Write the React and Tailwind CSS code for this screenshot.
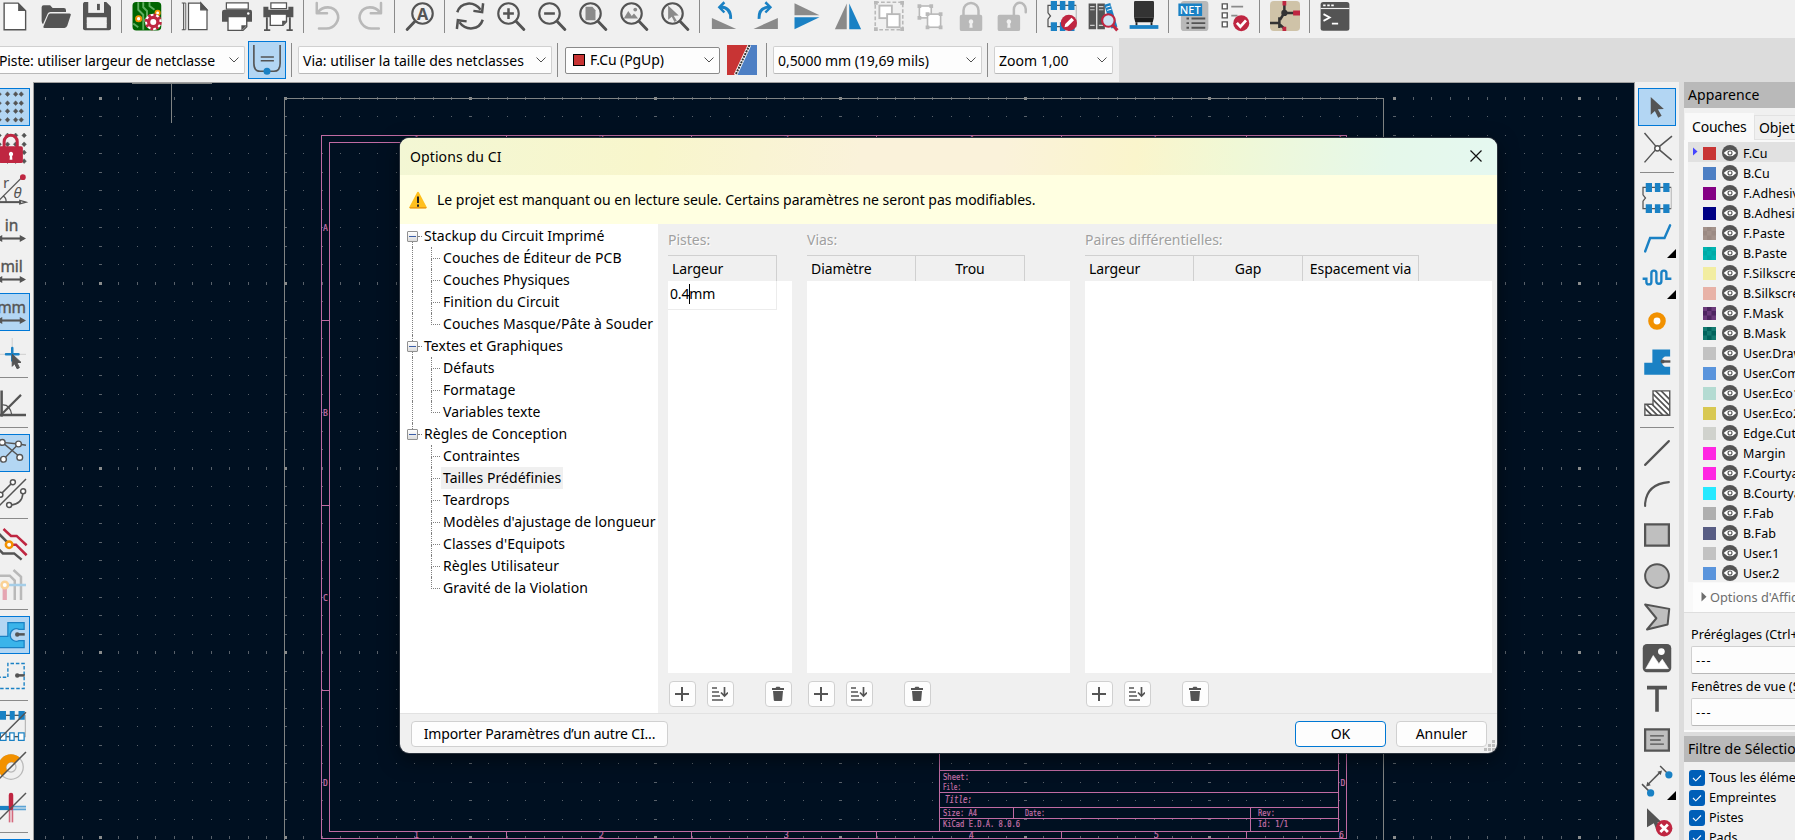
import React from "react";
import { clsx } from "clsx";

const G = "#545454";
const B = "#1a81c4";
const R = "#bf2641";
const L = "#b9b9b9";
const O = "#f29100";

/* ---------- icon drawings, all on a 24 unit grid ---------- */

const magnifier = (
  <g fill="none" stroke={G}>
    <circle cx="10" cy="10" r="8.2" strokeWidth="1.7" />
    <path d="M16 16.2L22.3 22.8" strokeWidth="2.3" strokeLinecap="round" />
  </g>
);

const gridDots = (xs, ys) =>
  xs.flatMap((x) =>
    ys.map((y) => <path key={x + "-" + y} d={`M${x} ${y - 1.9}l1.8 1.9-1.8 1.9-1.8-1.9z`} fill={G} stroke={G} strokeWidth="0.4" />)
  );

const unitArrow = (
  <g>
    <path d="M2 18.8H22" stroke={G} strokeWidth="1.7" />
    <path d="M0 18.8l5-2.8v5.6zM24 18.8l-5-2.8v5.6z" fill={G} />
  </g>
);

const unitText = (t) => (
  <text x="12.500" y="13" textAnchor="middle" fontFamily="Noto Sans, sans-serif" fontSize="12.4" fill={G} stroke={G} strokeWidth="0.3">
    {t}
  </text>
);

const chip = (
  <g>
    <path d="M4 3.5H.8v6l2 2.5-2 2.5v6H4M20 3.5h3.4M20 20.5h3.4" fill="none" stroke={G} strokeWidth="1" />
    <path d="M23.4 3.5v17" stroke="#b9b9b9" strokeWidth="0.9" />
    <path d="M7 3.5h11M7 20.5h11" stroke={G} strokeWidth="0.9" />
    <path d="M3 0h5v7.2H3zM10.3 0h4.4v7.2h-4.4zM17 0h5v7.2h-5zM3 17h5v7H3zM10.3 17h4.4v7h-4.4zM17 17h5v7h-5z" fill={B} />
  </g>
);

const lockShape = (c) => (
  <g>
    <path fillRule="evenodd" fill={c} d="M4.5 11h15q1.5 0 1.5 1.5v10q0 1.5-1.5 1.5h-15Q3 24 3 22.500v-10Q3 11 4.500 11zM12 14.500a2 2 0 0 0-1 3.600l-.3 3.200h2.600l-.3-3.200a2 2 0 0 0-1-3.600z" />
  </g>
);

const icons = {
  doc: (
    <g>
      <path d="M3.300 1.700h11.200l6 6.100v15.200H3.300z" fill="#fff" stroke={G} strokeWidth="1.100" />
      <path d="M14.500 1.500v6.500h6.300z" fill={G} />
    </g>
  ),
  folder: (
    <g fill={G}>
      <path d="M.5 5q0-1.600 1.600-1.600h5.200l2 2.200h9q1.700 0 1.700 1.700v1.500H7.500q-1.600 0-2.200 1.300L1.600 18.500Q.5 17.500.5 16z" />
      <path d="M7.300 9.900h15.500q1.500 0 1 1.400l-2.800 8.500q-.6 1.700-2.200 1.700H2.700q-1.300 0-.7-1.400l3.700-8.700q.5-1.500 1.600-1.500z" />
    </g>
  ),
  save: (
    <g>
      <path d="M1.800.8h17.600l3.800 3.700v17.200q0 1.600-1.600 1.600H2.400q-1.600 0-1.600-1.600V1.800z" fill={G} />
      <path d="M5 .8h12.600v8.700H5z" fill="#f0f0f0" />
      <path d="M12 2.300h2.300v5H12z" fill={G} />
      <path d="M3.800 13h16v8.700h-16z" fill="#f0f0f0" />
      <path d="M3.800 14.500h16M3.800 18h16" stroke="#f0f0f0" strokeWidth=".5" />
    </g>
  ),
  board: (
    <g>
      <rect x=".4" y=".8" width="23" height="22.800" rx="3" fill="#006400" />
      <path d="M5 1v6l4 4v12M9 1v4l3 3v5l-3 4M14 1v3l4 3M1 18l4 3" fill="none" stroke="#5faf5f" strokeWidth="1.500" />
      <circle cx="5.300" cy="14.200" r="2.100" fill="#fff" stroke={O} strokeWidth="1.500" />
      <circle cx="20.500" cy="9.500" r="1.800" fill="#fff" stroke={O} strokeWidth="1.300" />
      <circle cx="17" cy="16.700" r="6.600" fill="#fff" />
      <circle cx="17" cy="16.700" r="5.600" fill="none" stroke={R} strokeWidth="2.400" strokeDasharray="2.200 2.198" />
      <circle cx="17" cy="16.700" r="3.700" fill="none" stroke={R} strokeWidth="2.600" />
    </g>
  ),
  page: (
    <g fill="none" stroke={G} transform="translate(-1 0)">
      <path d="M6.200 1.600v21.200h14.800V6.900l-5-5.300z" fill="#fff" strokeWidth="1" />
      <path d="M16 1.500v5.500h5z" fill={G} />
      <path d="M2.300 1.500v21.500M.8 1.600h3M.8 23h3" strokeWidth=".9" />
      <path d="M4 1.500v21.500" strokeWidth=".7" />
    </g>
  ),
  print: (
    <g transform="translate(-0.800 0)">
      <path d="M3.500 1.500h17.500v5H3.500z" fill="#fff" stroke={G} strokeWidth="1" />
      <path d="M2 7h20.500Q24 7 24 8.500v8H0v-8Q0 7 2 7z" fill={G} />
      <circle cx="21" cy="10" r="1" fill="#fff" />
      <path d="M4.800 12.500h15v8l-3 3h-12z" fill="#fff" stroke={G} strokeWidth="1.100" />
      <path d="M15.500 23.800v-4.500h4.500z" fill={G} />
    </g>
  ),
  plot: (
    <g transform="translate(-0.500 0)">
      <path d="M6 1.500h12.500v4.500H6z" fill="#fff" stroke={G} strokeWidth="1" />
      <path d="M0 4.500h4v2.500h16V4.500h4V13H0z" fill={G} />
      <path d="M2.800 13v10M21.200 13v10M.5 23.300h5M18.500 23.300h5" stroke={G} strokeWidth="1.500" />
      <path d="M5.500 10.500h13v6l-2.800 3H5.500z" fill="#fff" stroke={G} strokeWidth="1.100" />
      <path d="M15 19.700v-4h3.500z" fill={G} />
    </g>
  ),
  undo: (
    <g transform="translate(-1 0)">
      <path d="M4.500 8.500C8 4 16.500 3.500 19.500 9.500S17 22 11 22H5" fill="none" stroke={L} strokeWidth="2.100" strokeLinecap="round" />
      <path d="M3.200 1.500v8.300h8.200" fill="none" stroke={L} strokeWidth="2" strokeLinejoin="round" strokeLinecap="round" />
    </g>
  ),
  redo: (
    <g transform="matrix(-1 0 0 1 24 0)">
      <path d="M4.500 8.500C8 4 16.500 3.500 19.500 9.500S17 22 11 22H5" fill="none" stroke={L} strokeWidth="2.100" strokeLinecap="round" />
      <path d="M3.200 1.500v8.300h8.200" fill="none" stroke={L} strokeWidth="2" strokeLinejoin="round" strokeLinecap="round" />
    </g>
  ),
  find: (
    <g>
      <g transform="matrix(-1 0 0 1 24 0)">{magnifier}</g>
      <text x="14" y="14.800" textAnchor="middle" fontFamily="Noto Sans, sans-serif" fontWeight="700" fontSize="13" fill={G}>A</text>
    </g>
  ),
  refresh: (
    <g fill="none" stroke={G} strokeWidth="2">
      <path d="M1.800 9C4.500.6 15 -.2 20.500 7" />
      <path d="M22.500 1.800l-.8 7-7-.9" />
      <path d="M22.200 15C19.500 23.400 9 24.200 3.500 17" />
      <path d="M1.500 22.400l.8-7 7 .9" />
    </g>
  ),
  zoomin: <g>{magnifier}<path d="M10 5.700v8.600M5.700 10h8.600" stroke={G} strokeWidth="2" /></g>,
  zoomout: <g>{magnifier}<path d="M5.700 10h8.600" stroke={G} strokeWidth="2" /></g>,
  zoomfit: <g>{magnifier}<path d="M6 4.500h5.500l2.500 2.800v8H6z" fill="#8a8a8a" /></g>,
  zoomobj: (
    <g>
      {magnifier}
      <path d="M3.800 14l3.600-6 2.800 4 1.800-2 3.300 4z" fill="#8a8a8a" />
      <circle cx="13" cy="6.800" r="1.500" fill="#8a8a8a" />
    </g>
  ),
  zoomsel: <g>{magnifier}<path d="M6.500 3.500l8.500 8-4 .2 2.400 4-1.800 1-2.200-4.200-2.900 2.500z" fill="#8a8a8a" /></g>,
  rotl: (
    <g>
      <path d="M1.500 13.500v8.800h19.500z" fill="#8a8a8a" />
      <path d="M8.500 4.800q8.500.5 8 9.500" fill="none" stroke={B} strokeWidth="2.300" />
      <path d="M11.500 1L7.500 5l4 4.200" fill="none" stroke={B} strokeWidth="2" />
    </g>
  ),
  rotr: (
    <g>
      <path d="M21.500 13.500v8.800H2z" fill="#8a8a8a" />
      <path d="M14.500 4.800q-8.500.5-8 9.500" fill="none" stroke={B} strokeWidth="2.300" />
      <path d="M11.500 1l4 4-4 4.200" fill="none" stroke={B} strokeWidth="2" />
    </g>
  ),
  flip: (
    <g>
      <path d="M2 1.800v9.500h20z" fill="#8a8a8a" />
      <path d="M2 22.500V13h20z" fill={B} />
    </g>
  ),
  mirror: (
    <g>
      <path d="M1.500 22.500h9.500V2z" fill="#8a8a8a" />
      <path d="M22.500 22.500H13V2z" fill={B} />
    </g>
  ),
  group: (
    <g fill="none" stroke={L}>
      <rect x="1" y="1" width="22" height="22" strokeWidth="1.300" strokeDasharray="3 1.600" />
      <path d="M0 0h3v3H0zM21 0h3v3h-3zM0 21h3v3H0zM21 21h3v3h-3z" fill={L} stroke="none" />
      <rect x="4.300" y="3.700" width="10" height="10" fill="#fff" strokeWidth="1.500" />
      <rect x="10.500" y="10.500" width="10" height="10.500" fill="#fff" strokeWidth="1.500" />
    </g>
  ),
  ungroup: (
    <g fill="none" stroke={L}>
      <rect x="3.500" y="4" width="9.500" height="9.500" fill="#fff" strokeWidth="1.300" />
      <rect x="10" y="10.500" width="10.500" height="10.500" fill="#fff" strokeWidth="1.300" />
      <path d="M2 2.500h3v3H2zM11.500 2.500h3v3h-3zM2 12h3v3H2zM8.500 9h3v3h-3zM19 9h3v3h-3zM8.500 19.500h3v3h-3zM19 19.500h3v3h-3z" fill={L} stroke="none" />
    </g>
  ),
  lock: <g>{lockShape(L)}<path d="M6 11.500V7.500a6 6 0 0 1 12 0v4" fill="none" stroke={L} strokeWidth="2" /></g>,
  unlock: (
    <g>
      <g transform="translate(-2.500 0)">{lockShape(L)}</g>
      <path d="M13.500 11.500V7a4.700 5.200 0 0 1 9.500-.5v2.500" fill="none" stroke={L} strokeWidth="2" strokeLinecap="round" />
    </g>
  ),
  fped: (
    <g>
      {chip}
      <circle cx="17.500" cy="17.500" r="6.500" fill={R} />
      <path d="M14 21l.6-2.600 5-5 2 2-5 5z" fill="#fff" />
    </g>
  ),
  lib: (
    <g>
      <path d="M.5 2h6v20.500h-6zM7.500 2h6v20.500h-6z" fill={G} />
      <path d="M1.700 4.500h3.600M1.700 7h3.600M8.700 4.500h3.600M8.700 7h3.600M1.700 19.500h3.600M8.700 19.500h3.600" stroke="#ccc" strokeWidth=".9" />
      <path d="M13 3l4.800-1.500 5.700 19-4.800 1.500z" fill={B} />
      <path d="M14.500 5l3.500-1M15.300 7.500l3.500-1" stroke="#fff" strokeWidth=".8" />
      <circle cx="16.300" cy="15.600" r="5" fill="#cfe3f2" stroke={R} strokeWidth="1.700" />
      <path d="M20 19.500l3.500 4" stroke={R} strokeWidth="2.500" />
    </g>
  ),
  view3d: (
    <g>
      <path d="M4 1q0-1 1-1h14q1 0 1 1v12H4z" fill="#333" />
      <path d="M4 13h16l-1 4H5z" fill="#1c1c1c" />
      <path d="M6 17v2.500M18 17v2.500" stroke="#222" strokeWidth="1.500" />
      <path d="M.5 19.300h23v3H.5z" fill={B} />
    </g>
  ),
  net: (
    <g>
      <rect x="1.500" y="0" width="22" height="24" rx="2.500" fill={L} />
      <path d="M6 14h2M6 17.700h2M6 21.400h2M10 14h11M10 17.700h11M10 21.400h11" stroke={G} strokeWidth="1.500" />
      <path d="M-.5 2h19v10H-.5z" fill={B} />
      <text x="9" y="10.200" textAnchor="middle" fontFamily="Noto Sans, sans-serif" fontSize="8.800" fill="#fff" fontWeight="500">NET</text>
    </g>
  ),
  drc: (
    <g>
      <path d="M1.800 2.300h4v4h-4zM1.800 9.500h4v4h-4zM1.800 16.700h4v4h-4z" fill="#fff" stroke={G} strokeWidth="1.100" />
      <path d="M9 4.500h9.500M9 11.600h5" stroke="#8a8a8a" strokeWidth="1.400" />
      <circle cx="17" cy="17.700" r="6.400" fill={R} />
      <path d="M13.500 17.500l2.800 3 4.500-5" fill="none" stroke="#fff" strokeWidth="2.200" />
    </g>
  ),
  sch: (
    <g>
      <rect x="0" y="0" width="24" height="24" rx="3" fill="#cfc3a8" />
      <path d="M0 17.500h8M7.500 13v8.500M11.500 0v9.500L8 15M11.500 9.500H20M8 19l3.500 3v2" fill="none" stroke="#333" strokeWidth="2" />
      <circle cx="11.500" cy="9.500" r="2.500" fill="#333" />
      <path d="M10 0h3v3.500h-3zM18.500 7.500H24v4h-5.500zM10 20.500h3V24h-3z" fill={R} />
    </g>
  ),
  console: (
    <g>
      <rect x=".5" y=".8" width="23" height="23" rx="2" fill={G} />
      <path d="M.5 6h23" stroke="#f0f0f0" strokeWidth=".9" />
      <path d="M2.500 3.500h2M5.800 3.500h2M9 3.500h2" stroke="#fff" strokeWidth="1.500" />
      <path d="M2.800 10.500l5 2.700-5 2.700M9.500 18h5" fill="none" stroke="#fff" strokeWidth="1.400" />
    </g>
  ),
  grid: <g>{gridDots([2.500, 9.200, 15.700, 20.200], [1.700, 8.900, 15.300, 22.200])}</g>,
  gridlock: (
    <g>
      {gridDots([2.500, 9.200, 15.700, 22.500], [1.900, 9, 15.500, 22.500])}
      <path d="M6.500 12V7a5.200 5.200 0 0 1 10.500 0v5" fill="none" stroke={R} strokeWidth="2.400" />
      <rect x="2.500" y="10.500" width="19" height="13.500" rx="1.500" fill={R} />
      <path d="M12 15a1.800 1.800 0 0 0-.9 3.300l-.2 3h2.200l-.2-3A1.800 1.800 0 0 0 12 15z" fill="#fff" />
    </g>
  ),
  polar: (
    <g>
      <path d="M1 22.500L21 2.500" stroke={G} strokeWidth="1.100" />
      <path d="M0 22.500h20" stroke={G} strokeWidth="1.600" />
      <path d="M24 22.500l-5-1.400v2.800zM5.500 17.500q3 1.500 2.500 5" fill="none" stroke={G} strokeWidth="1" />
      <circle cx="21.500" cy="2.500" r="2.300" fill={R} />
      <text x="5.500" y="11" fontFamily="Noto Sans, sans-serif" fontSize="12" fill={G}>r</text>
      <text x="14" y="19.500" fontFamily="Noto Sans, sans-serif" fontStyle="italic" fontSize="12" fill={G}>θ</text>
    </g>
  ),
  inch: <g>{unitText("in")}{unitArrow}</g>,
  mil: <g>{unitText("mil")}{unitArrow}</g>,
  mm: <g>{unitText("mm")}{unitArrow}</g>,
  cursor: (
    <g>
      <path d="M13 0v23M2 13h22" stroke="#d5d5d5" strokeWidth="1" />
      <path d="M13 8v10M8 13h10" stroke={B} strokeWidth="2" strokeLinecap="round" />
      <path d="M13 13l7 6.500-3.300.2 2 4-1.800.9-2-4-1.900 2z" fill={G} stroke={G} strokeWidth=".8" />
    </g>
  ),
  angle: (
    <g fill="none" stroke={G}>
      <path d="M4.500 2v21M2 21.500h22" strokeWidth="2" />
      <path d="M4.500 21L20 5.500" strokeWidth="1.700" />
      <path d="M5 13.500q6-.5 7.500 7.500" strokeWidth="1" />
    </g>
  ),
  rats: (
    <g stroke={G} strokeWidth="1.100" fill="#fff">
      <path d="M5 3.500l13 1.300 6 1M5 3.500l14 11.500M6 17L18 4.800" />
      <circle cx="5" cy="3.500" r="2.300" /><circle cx="18" cy="4.800" r="2.300" />
      <circle cx="6" cy="17" r="2.300" /><circle cx="19" cy="15.500" r="2.300" />
    </g>
  ),
  curved: (
    <g stroke={G} strokeWidth="1.200" fill="none">
      <path d="M1 23L24 0M4.500 11.500L13 3M11.500 21Q21 20 21.500 11.500" />
      <circle cx="13.500" cy="2.500" r="2" fill="#fff" /><circle cx="3.500" cy="12.500" r="2" fill="#fff" />
      <circle cx="10.500" cy="20.800" r="2" fill="#fff" /><circle cx="21.700" cy="9.800" r="2" fill="#fff" />
    </g>
  ),
  netcolor: (
    <g fill="none" strokeWidth="2">
      <path d="M6 0l6 5.500h4.500l8 7.500M12 12.500h4l8.500 8.500" stroke={R} />
      <path d="M1.500 3l7.500 7.500M0 14l5.500 5.500h9l6 5" stroke={G} />
      <circle cx="10.500" cy="12.500" r="2.600" fill="#fff" stroke={O} />
    </g>
  ),
  dim: (
    <g fill="none" strokeWidth="2">
      <path d="M2 4.500h9l4 4V24M14 0l6 5.500V24" stroke={L} />
      <path d="M7 12v12" stroke="#e5a5b2" strokeWidth="3.400" />
      <path d="M10 12h14" stroke="#a5cee8" />
      <circle cx="7" cy="12" r="2.600" fill="#fff" stroke="#fad296" />
    </g>
  ),
  zone: (
    <g>
      <path d="M1.500 22V13H9.500V2h13v5.500h-4a5 5 0 1 0 0 9h4V22z" fill="#3ab4ea" stroke={B} strokeWidth="1" />
      <path d="M17 11.500h6" stroke={G} strokeWidth="2" /><circle cx="17" cy="11.500" r="1.800" fill={G} />
    </g>
  ),
  zoneout: (
    <g>
      <path d="M1.500 22V13H9.500V2h13v20z" fill="none" stroke={B} strokeWidth="1.100" strokeDasharray="2.800 1.500" />
      <path d="M17 11.500h6" stroke={G} strokeWidth="2" /><circle cx="17" cy="11.500" r="1.800" fill={G} />
    </g>
  ),
  padsk: (
    <g>
      <path d="M3 3.500h20.500v17H3" fill="none" stroke={L} />
      <path d="M3 3.500h18M3 20.500h18" stroke={G} strokeWidth="1" />
      <path d="M3 0h5v7H3zM11 0h4v7h-4zM18 0h5v7h-5z" fill={B} />
      <path d="M3.500 17.500H8v6H3.500zM11 17.500h3.500v6H11zM18 17.500h4.500v6H18z" fill="#fff" stroke={B} strokeWidth="1" />
      <path d="M1 24L24 1" stroke={G} strokeWidth="1.200" />
    </g>
  ),
  viask: (
    <g fill="none">
      <circle cx="12" cy="12" r="9.800" stroke={L} /><circle cx="12" cy="12" r="4" stroke={L} />
      <path d="M4.800 19.200A10 10 0 0 1 19.200 4.800L15 9a4.300 4.300 0 0 0-6 6z" fill={O} />
      <path d="M1 23L24 0" stroke={G} strokeWidth="1.200" />
    </g>
  ),
  tracksk: (
    <g>
      <path d="M12 12v11.500" stroke="#d5687d" strokeWidth="3.600" />
      <path d="M12 12v12" stroke="#f0f0f0" strokeWidth="1" />
      <path d="M12 12h12" stroke="#5ba3d5" strokeWidth="3.600" /><path d="M13 12h11" stroke="#f0f0f0" strokeWidth=".8" />
      <path d="M0 12h12" stroke={B} strokeWidth="3.400" />
      <path d="M12 12V1.500" stroke={R} strokeWidth="3.600" strokeLinecap="round" />
      <path d="M1 23L24 0" stroke={G} strokeWidth="1.200" />
    </g>
  ),
  select: <path d="M7 4l10.500 9.500-4.800.3 3 5.200-2.700 1.500-2.700-5.300L7 18.200z" fill={G} />,
  ratsnest: (
    <g stroke={G} strokeWidth="1.200" fill="none">
      <path d="M2 0l9 10.500M24 2.500L14 10.700M2 23.500l8.800-10M23.700 21.700l-9.500-8" />
      <circle cx="12.300" cy="12.200" r="2.100" fill="#fff" />
    </g>
  ),
  chip,
  route: <path d="M2.500 22l4-10.800h11.500L22.500 1" fill="none" stroke={B} strokeWidth="1.900" strokeLinecap="round" />,
  tune: <path d="M.5 12h3v2.500a2 2 0 0 0 4 0V7.500a2 2 0 0 1 4 0v6.500a2 2 0 0 0 4 0V7.500a2 2 0 0 1 4 0v4.500H23.500" transform="translate(0 -1)" fill="none" stroke={B} strokeWidth="1.900" />,
  via: <circle cx="12" cy="12" r="4.900" fill="#fff" stroke={O} strokeWidth="4.300" />,
  zonefill: (
    <g>
      <path d="M1.800 22.200V12.500H8.300V2h14.200v5.500h-4.200a4.600 4.600 0 0 0 0 8.200h4.200v6.500z" fill={B} />
      <path d="M17 11.600h5.700" stroke={G} strokeWidth="1.900" /><circle cx="16.500" cy="11.600" r="1.600" fill={G} />
    </g>
  ),
  keepout: (
    <g>
      <defs><clipPath id="ko"><path d="M2.300 21.800V13h6.500V2.300h13.400v19.500z" /></clipPath></defs>
      <path d="M2.300 21.800V13h6.500V2.300h13.400v19.500z" fill="#fff" />
      <path clipPath="url(#ko)" d="M-3 11l14 14M1 10.500l14 14M3 8l16 16M6 6.500l18 18M6 2l18 18M10.500 2l14 14M15 2l9 9" stroke={G} strokeWidth="1.400" />
      <path d="M2.300 21.800V13h6.500V2.300h13.400v19.500z" fill="none" stroke={G} strokeWidth="1.100" />
    </g>
  ),
  line: <path d="M2.500 21.500l19-19" stroke={G} strokeWidth="1.700" strokeLinecap="round" />,
  arc: <path d="M2.500 21.500v-2Q4 4 21.500 2.500" fill="none" stroke={G} strokeWidth="1.700" strokeLinecap="round" />,
  rect: <rect x="2.500" y="3.500" width="19" height="17" fill="#bfbfbf" stroke={G} strokeWidth="1.800" />,
  circle: <circle cx="12" cy="12" r="9.500" fill="#bfbfbf" stroke={G} strokeWidth="1.600" />,
  poly: <path d="M2.500 2l19.300 3.500-1.300 12.500L4 22l7.500-9z" fill="#bfbfbf" stroke={G} strokeWidth="1.600" strokeLinejoin="round" />,
  image: (
    <g>
      <rect x=".6" y=".8" width="22.800" height="22.500" rx="3.300" fill={G} />
      <path d="M3 20.500l6-10.500 4.500 6.500 2.700-3.500 5 7.500z" fill="#fff" stroke="#fff" strokeWidth=".5" />
      <circle cx="15.500" cy="6.800" r="2.700" fill="#fff" />
    </g>
  ),
  text: <path d="M4 2.900h16M12 2.900v19.300" fill="none" stroke={G} strokeWidth="2.900" />,
  textbox: (
    <g>
      <rect x="2.500" y="3.500" width="19" height="17" fill="#bfbfbf" stroke={G} strokeWidth="1.800" />
      <path d="M6.500 8.700h11M6.500 12h8.500M6.500 15.300h11" stroke={G} strokeWidth="1.100" />
    </g>
  ),
  measure: (
    <g>
      <path d="M4.500 15L15 4.500" stroke={G} strokeWidth="1.200" />
      <path d="M3.300 16.300l1-3.700 2.700 2.700zM16 3.500l-1 3.700-2.700-2.700z" fill={G} />
      <path d="M0 14.500l6 6M14.500 0l6 6" stroke={G} strokeWidth="1.200" />
      <circle cx="6.900" cy="21.500" r="2.900" fill={B} /><circle cx="21.500" cy="7" r="2.900" fill={B} />
    </g>
  ),
  del: (
    <g>
      <path d="M4 1l11.500 11-5 .3-6.500 3.900z" fill={G} />
      <path d="M10 10l3 8" stroke={G} strokeWidth="3" />
      <circle cx="17.700" cy="17" r="6.600" fill={R} />
      <path d="M14.700 14l6 6M20.700 14l-6 6" stroke="#fff" strokeWidth="2.200" />
    </g>
  ),
  trackw: (
    <g fill="none">
      <path d="M1.500 0v14.500q0 6.500 5 6.500h11q5 0 5-6.500V0" stroke={G} strokeWidth="1.300" />
      <path d="M7 9.500h10.500M7 12.500h10.500" stroke={G} strokeWidth="1.200" />
      <circle cx="12" cy="21" r="2.800" fill={B} />
    </g>
  ),
};

const Icon = ({ n, className = "size-[30px]" }) => (
  <svg viewBox="0 0 24 24" className={clsx("shrink-0 overflow-visible", className)}>{icons[n]}</svg>
);

const topTools = "doc folder save | board | page print plot | undo redo | find | refresh zoomin zoomout zoomfit zoomobj zoomsel | rotl rotr flip mirror group ungroup lock unlock | fped lib view3d | net drc | sch | console".split(" ");
const leftTools = "*grid gridlock polar inch mil *mm cursor | angle | *rats curved | netcolor dim | *zone zoneout | padsk viask tracksk | *grid".split(" ");
const rightTools = "*select ratsnest | chip route+ tune+ via zonefill keepout | line arc rect circle poly image text textbox measure+ del".split(" ");

function VerticalBar({ tools, className }) {
  return (
    <div className={clsx("flex flex-col items-center", className)}>
      {tools.map((t, i) => {
        if (t === "|")
          return <div key={i} className="flex h-[9px] w-[34px] shrink-0 items-center"><div className="h-px w-full bg-[#8a8a8a]" /></div>;
        const name = t.replace(/[*+]/g, "");
        return (
          <div key={i} className="flex h-[41px] shrink-0 items-center">
            <div className={clsx("relative flex size-[38px] items-center justify-center border", t[0] === "*" ? "border-[#0078d7] bg-[#b3d6f3]" : "border-transparent")}>
              <Icon n={name} />
              {t.endsWith("+") && <svg viewBox="0 0 9 9" className="absolute right-[-1px] bottom-[-1px] size-[9px]"><path d="M9 0v9H0z" fill="#000" /></svg>}
            </div>
          </div>
        );
      })}
    </div>
  );
}

const Chevron = () => (
  <svg viewBox="0 0 10 6" className="h-[6px] w-[10px] shrink-0"><path d="M.5.5L5 5 9.500.5" fill="none" stroke="#505050" /></svg>
);

const Combo = ({ children, className, dark }) => (
  <div className={clsx("flex shrink-0 items-center justify-between rounded-[2px] border bg-[#fdfdfd] pr-[5px]", dark ? "h-[27px] border-[#8a8a8a] pl-[7px]" : "h-[28px] border-[#d0d0d0] border-b-[#b8b8b8] pl-[4px]", className)}>
    <div className={clsx("flex items-center", !dark && "pt-px")}>{children}</div>
    <Chevron />
  </div>
);

const Sep = ({ className }) => <div className={clsx("h-[34px] w-px shrink-0 bg-[#8a8a8a]", className)} />;

/* ---------- board canvas ---------- */

const OX = 34;
const OY = 83;

function dotPaths() {
  let small = "";
  let big = "";
  for (let i = -3; i < 84; i++) {
    const x = Math.round(100 + i * 18.49) - OX;
    for (let j = 0; j < 41; j++) {
      const y = Math.round(98 + j * 18.48) - OY;
      const mx = i % 10 === 0;
      const my = j % 10 === 0;
      if (mx && my) big += `M${x - 1} ${y - 1}h3v3h-3z`;
      else if (mx) small += `M${x - 1} ${y}h3v1h-3z`;
      else if (my) small += `M${x} ${y - 1}h1v3h-1z`;
      else small += `M${x} ${y}h1v1h-1z`;
    }
  }
  return [small, big];
}
const [smallDots, bigDots] = dotPaths();

const sheetText = [
  ["Sheet:", 943, 780, 26], ["File:", 943, 790, 18], ["Size: A4", 943, 816, 34], ["Date:", 1025, 816, 20],
  ["Rev:", 1258, 816, 17], ["KiCad E.D.A. 8.0.6", 943, 827, 77], ["Id: 1/1", 1258, 827, 30],
];

function Board() {
  return (
    <svg viewBox="34 83 1600 757" className="block h-[757px] w-[1600px]">
      <g transform="translate(34 83)" shapeRendering="crispEdges">
        <path d={smallDots} fill="#59616a" />
        <path d={bigDots} fill="#8a8c8c" />
      </g>
      <g fill="none" stroke="#7f8383" shapeRendering="crispEdges">
        <path d="M284.500 845V98.500H1383.500V845" />
        <path d="M132 83.500h80M171.500 83v40" />
      </g>
      <g fill="none" stroke="#c06ba3" shapeRendering="crispEdges">
        <path d="M321.500 135.500H1346.500V838.500H321.500z" />
        <path d="M329.500 142.500H1338.500V831.500H329.500z" />
        <path d="M321 320.500h8M321 505.500h8M321 690.500h8" />
        <path d="M506.500 135v7M691.500 135v7M876.500 135v7M1061.500 135v7M1246.500 135v7M506.500 831v7M691.500 831v7M876.500 831v7M1061.500 831v7M1246.500 831v7" />
        <path d="M939.500 740V831M939 770.500h399M939 792.500h399M939 807.500h399M939 818.500h399M1013.500 807v11M1250.500 807v24" />
      </g>
      <g fill="#c872ab" stroke="#c872ab" strokeWidth="0.200" fontFamily="DejaVu Sans Mono, monospace" fontSize="8">
        {["A", "B", "C", "D"].map((c, i) => <text key={c} x="323" y={231 + i * 185}>{c}</text>)}
        {[1, 2, 3, 4, 5, 6].map((c, i) => <text key={c} x={414 + i * 185} y="838">{c}</text>)}
        {[1, 2, 3, 4, 5, 6].map((c, i) => <text key={c} x={414 + i * 185} y="142">{c}</text>)}
        <text x="1340.500" y="786">D</text>
        {sheetText.map(([t, x, y, w]) => (
          <text key={t} x={x} y={y} textLength={w} lengthAdjust="spacingAndGlyphs" fontSize="9">{t}</text>
        ))}
        <text x="945" y="803" textLength="27" lengthAdjust="spacingAndGlyphs" fontSize="11" fontStyle="italic">Title:</text>
      </g>
    </svg>
  );
}

/* ---------- layers panel ---------- */

const layers = [
  ["F.Cu", "#c83434"], ["B.Cu", "#4d7fc4"], ["F.Adhesive", "#840084"], ["B.Adhesive", "#000084"],
  ["F.Paste", "#a3928b", "#9b8a83"], ["B.Paste", "#00b4b0", "#00aaa6"], ["F.Silkscreen", "#f2eda1"], ["B.Silkscreen", "#e8b2a7"],
  ["F.Mask", "#6b3a7b", "#4e2560"], ["B.Mask", "#147a70", "#02635c"], ["User.Drawings", "#c2c2c2"], ["User.Comments", "#5994dc"],
  ["User.Eco1", "#b4dbd2"], ["User.Eco2", "#d8c852"], ["Edge.Cuts", "#d0d2cd"], ["Margin", "#ff26e2"],
  ["F.Courtyard", "#ff26e2"], ["B.Courtyard", "#26e9ff"], ["F.Fab", "#afafaf"], ["B.Fab", "#585d84"],
  ["User.1", "#c2c2c2"], ["User.2", "#5994dc"],
];

function LayerRow({ name, color, alt, active }) {
  return (
    <div className={clsx("flex h-[20px] items-center pt-[2px] text-[12.500px] tracking-[0.100px] whitespace-nowrap", active && "bg-[#e1e1e1]")}>
      <svg viewBox="0 0 15 20" className="-mt-[2px] h-[20px] w-[15px] shrink-0">{active && <path d="M5 5.500l4.500 4-4.500 4z" fill="#4444ff" />}</svg>
      <svg viewBox="0 0 13 13" className="size-[13px] shrink-0">
        <path d="M0 0h13v13H0z" fill={color} />
        {alt && <path d="M4 0h4.500v4H13v4.500H8.500V13H4V8.500H0V4h4zM4 4v4.500h4.500V4z" fillRule="evenodd" fill={alt} />}
      </svg>
      <svg viewBox="0 0 16 16" className="ml-[6px] size-[16px] shrink-0">
        <circle cx="8" cy="8" r="8" fill="#545454" />
        <path d="M1.700 8Q8 1.300 14.300 8 8 14.700 1.700 8z" fill="#fff" />
        <circle cx="8" cy="8" r="2" fill="#fff" stroke="#545454" strokeWidth="1.100" />
      </svg>
      <span className="mt-px ml-[5px]">{name}</span>
    </div>
  );
}

function RightPanel() {
  return (
    <div className="flex w-[111px] shrink-0 flex-col overflow-hidden bg-[#f0f0f0] whitespace-nowrap">
      <div className="flex h-[26px] shrink-0 items-center bg-[#b9b9b9] pl-[4px] tracking-[0.100px]">Apparence</div>
      <div className="flex h-[32px] shrink-0 items-end pt-[5px] pl-px">
        <div className="flex h-[27px] w-[69px] shrink-0 items-center bg-[#f9f9f9] pl-[7px] tracking-[-0.200px]">Couches</div>
        <div className="flex h-[25px] w-[70px] shrink-0 items-center border border-[#e2e2e2] pt-px pl-[4px] tracking-[-0.100px]">Objets</div>
      </div>
      <div className="h-[443px] shrink-0 bg-[#f9f9f9] pt-[2px] pl-[4px]">
        <div className="bg-[#f1f1f1]">
          {layers.map(([n, c, a], i) => <LayerRow key={i} name={n} color={c} alt={a} active={i === 0} />)}
        </div>
      </div>
      <div className="flex h-[30px] shrink-0 border-b border-[#dedede] bg-[#f9f9f9] pl-[9px]">
        <div className="flex w-full items-center bg-[#fdfdfd] pb-[2px] pl-[8px] text-[12.800px] text-[#6d6d6d]">
          <svg viewBox="0 0 6 10" className="mr-[3px] h-[10px] w-[6px] shrink-0"><path d="M.5 0v9.500L5.500 4.800z" fill="#6d6d6d" /></svg>
          <span>Options d'Affichage</span>
        </div>
      </div>
      <div className="h-[119px] shrink-0 border-b-2 border-[#fafafa] pl-[7px] text-[12.700px]">
        <div className="flex h-[33px] items-end pb-[2px]">Préréglages (Ctrl+Tab):</div>
        <div className="flex h-[28px] w-[130px] items-center rounded-[2px] border border-[#d0d0d0] border-b-[#b8b8b8] bg-[#fdfdfd] pl-[4px] tracking-[1.200px]">---</div>
        <div className="flex h-[24px] items-center">Fenêtres de vue (Shift+Tab):</div>
        <div className="flex h-[28px] w-[130px] items-center rounded-[2px] border border-[#d0d0d0] border-b-[#b8b8b8] bg-[#fdfdfd] pl-[4px] tracking-[1.200px]">---</div>
      </div>
      <div className="h-[4px] shrink-0 bg-[#dcdcdc]" />
      <div className="flex h-[26px] shrink-0 items-center bg-[#b9b9b9] pl-[4px]">Filtre de Sélection</div>
      <div className="pt-[6px] pl-[5px] text-[12.600px]">
        {["Tous les éléments", "Empreintes", "Pistes", "Pads"].map((t) => (
          <div key={t} className="flex h-[20px] items-center">
            <svg viewBox="0 0 16 16" className="mr-[4px] size-[16px] shrink-0">
              <rect width="16" height="16" rx="3" fill="#005fb8" />
              <path d="M4 8l2.800 2.800L12 5.500" fill="none" stroke="#fff" strokeWidth="1.100" />
            </svg>
            {t}
          </div>
        ))}
      </div>
    </div>
  );
}

/* ---------- dialog ---------- */

const tree = [
  ["Stackup du Circuit Imprimé", ["Couches de Éditeur de PCB", "Couches Physiques", "Finition du Circuit", "Couches Masque/Pâte à Souder"]],
  ["Textes et Graphiques", ["Défauts", "Formatage", "Variables texte"]],
  ["Règles de Conception", ["Contraintes", "Tailles Prédéfinies", "Teardrops", "Modèles d'ajustage de longueur", "Classes d'Equipots", "Règles Utilisateur", "Gravité de la Violation"]],
];

function Tree() {
  return (
    <div className="w-[258px] shrink-0 overflow-hidden bg-white pt-px tracking-[0.050px] whitespace-nowrap">
      {tree.map(([root, kids], g) => (
        <div key={root}>
          <div className="flex h-[22px] items-center pl-[7px]">
            <div className="flex h-full w-[11px] flex-col pl-[5px]">
              <div className={clsx("h-[6px] border-l", g ? "border-dotted border-[#808080]" : "border-transparent")} />
              <div className="-ml-[5px] flex h-[11px] w-[11px] shrink-0 items-center justify-center rounded-[1px] border border-[#919191] bg-linear-to-b from-white to-[#dcdcdc]">
                <div className="h-px w-[7px] bg-[#3b5ea8]" />
              </div>
              <div className={clsx("h-[5px] border-l", g < 2 ? "border-dotted border-[#808080]" : "border-transparent")} />
            </div>
            <div className="h-px w-[4px] border-t border-dotted border-[#808080]" />
            <span className="ml-[2px]">{root}</span>
          </div>
          {kids.map((k, i) => (
            <div key={k} className="flex h-[22px] pl-[12px]">
              <div className={clsx("w-[19px] border-l", g < 2 ? "border-dotted border-[#808080]" : "border-transparent")} />
              <div className="w-[9px]">
                <div className="h-[12px] border-b border-l border-dotted border-[#808080]" />
                {i < kids.length - 1 && <div className="h-[10px] border-l border-dotted border-[#808080]" />}
              </div>
              <span className={clsx("ml-px flex items-center px-[2px]", k === "Tailles Prédéfinies" && "bg-[#f0f0f0]")}>{k}</span>
            </div>
          ))}
        </div>
      ))}
    </div>
  );
}

const GridButton = ({ kind, className }) => (
  <div className={clsx("flex h-[26px] w-[27px] shrink-0 items-center justify-center rounded-[4px] border border-[#d0d0d0] bg-[#fdfdfd] pr-px", className)}>
    <svg viewBox="0 0 16 16" className="size-[16px]">
      {kind === "add" && <path d="M8 1v14M1 8h14" stroke={G} strokeWidth="2" />}
      {kind === "sort" && <path d="M0 2h5M0 6h7M0 10h8M0 14h11M12.500 1v8M9 6.500l3.500 3.500L16 6.500" fill="none" stroke={G} strokeWidth="1.700" />}
      {kind === "del" && <path d="M2 2h3.500L6.500.8h3l1 1.200H14v2H2zM3 5h10l-.8 9.200q-.1.800-1 .8H4.800q-.9 0-1-.8z" fill={G} />}
    </svg>
  </div>
);

function SizeGrid({ title, cols, className, children }) {
  return (
    <div className={clsx("flex shrink-0 flex-col", className)}>
      <div className="flex h-[31px] items-center text-[#a0a0a0] [text-shadow:1px_1px_0_#fff]">{title}</div>
      <div className="flex h-[26px]">
        {cols.map(([name, w], i) => (
          <div key={name} className={clsx("flex shrink-0 items-center border-t border-r border-[#d0d0d0] tracking-[-0.080px]", w, i ? "justify-center" : "pl-[4px]")}>{name}</div>
        ))}
      </div>
      <div className="h-[392px] bg-white">{children}</div>
      <div className="mt-[8px] flex pl-px">
        <GridButton kind="add" />
        <GridButton kind="sort" className="ml-[11px]" />
        <GridButton kind="del" className="ml-[31px]" />
      </div>
    </div>
  );
}

const Button = ({ children, className }) => (
  <div className={clsx("flex h-[26px] items-center justify-center rounded-[4px] border bg-[#fdfdfd]", className)}>{children}</div>
);

function Dialog() {
  return (
    <div className="absolute top-[138px] left-[400px] flex h-[615px] w-[1097px] flex-col overflow-hidden rounded-[9px] bg-[#f0f0f0] shadow-[0_0_0_1px_#2a323c,0_6px_20px_rgba(0,0,0,0.5)]">
      <div className="flex h-[37px] shrink-0 items-center justify-between bg-[linear-gradient(97deg,#f3f7d4_0%,#f8f6cc_23%,#faf2da_42%,#faf2da_55%,#faf5cc_67%,#f0f8d6_76%,#e5f8ea_90%,#e5f8f0_100%)] pr-[15px] pl-[10px]">
        <span className="tracking-[0.100px]">Options du CI</span>
        <svg viewBox="0 0 12 12" className="mb-px size-[12px]"><path d="M.5.5l11 11M11.500.5l-11 11" stroke="#111" strokeWidth="1.200" /></svg>
      </div>
      <div className="flex h-[49px] shrink-0 items-center bg-[#ffffe1] pl-[9px]">
        <svg viewBox="0 0 18 18" className="size-[18px]">
          <path d="M9 .8q.7 0 1 .6l7.500 14.400q.6 1.500-.8 1.500H1.300q-1.400 0-.8-1.500L8 1.400q.3-.6 1-.6z" fill="#ffc01e" />
          <path d="M.4 16.200q.1 1.400 1 1.400h15.200q1 0 1-1.400z" fill="#e8920c" />
          <path d="M9 5.500v6.500M9 13.500v2.200" stroke="#222" strokeWidth="2" />
        </svg>
        <span className="ml-[10px] tracking-[-0.020px]">Le projet est manquant ou en lecture seule. Certains paramètres ne seront pas modifiables.</span>
      </div>
      <div className="flex h-[489px] shrink-0">
        <Tree />
        <div className="flex gap-[15px] pl-[10px]">
          <SizeGrid title="Pistes:" cols={[["Largeur", "w-[109px]"]]} className="w-[124px]">
            <div className="flex h-[29px] w-[109px] items-center border-r border-b border-[#ececec] pb-[3px] pl-[2px] tracking-[-0.150px]">
              <span>0.4</span>
              <span className="-mr-px h-[20px] w-px bg-black" />
              <span>mm</span>
            </div>
          </SizeGrid>
          <SizeGrid title="Vias:" cols={[["Diamètre", "w-[109px]"], ["Trou", "w-[109px]"]]} className="w-[263px]" />
          <SizeGrid title="Paires différentielles:" cols={[["Largeur", "w-[109px]"], ["Gap", "w-[109px]"], ["Espacement via", "w-[116px]"]]} className="w-[407px]" />
        </div>
      </div>
      <div className="flex flex-1 items-start border-t border-[#e2e2e2] pt-[7px] pr-[10px] pl-[11px]">
        <Button className="w-[257px] border-[#d0d0d0] tracking-[-0.170px]">Importer Paramètres d’un autre CI...</Button>
        <Button className="ml-auto w-[91px] border-[#0078d4]">OK</Button>
        <Button className="ml-[10px] w-[91px] border-[#d0d0d0] tracking-[-0.100px]">Annuler</Button>
      </div>
      <svg viewBox="0 0 11 11" className="absolute right-[2px] bottom-[2px] size-[11px]">
        <path d="M8 0h3v3H8zM4 4h3v3H4zM8 4h3v3H8zM0 8h3v3H0zM4 8h3v3H4zM8 8h3v3H8z" fill="#bdbdbd" />
      </svg>
    </div>
  );
}

export default function App() {
  return (
    <div className="relative flex h-[840px] w-[1795px] flex-col overflow-hidden bg-[#f0f0f0] font-['Noto_Sans',sans-serif] text-[14px] leading-[20px] text-black">
      <div className="-ml-[6px] flex h-[38px] shrink-0 items-start">
        {topTools.map((t, i) =>
          t === "|" ? (
            <div key={i} className="flex h-[33px] w-[9px] shrink-0 justify-center"><div className="h-full w-px bg-[#8a8a8a]" /></div>
          ) : (
            <div key={i} className="flex w-[41px] shrink-0 justify-center pt-px"><Icon n={t} /></div>
          )
        )}
      </div>
      <div className="flex h-[44px] shrink-0 bg-[#dcdcdc]">
        <div className="flex w-[1119px] items-center bg-[#f0f0f0] whitespace-nowrap">
          <Combo className="-ml-[6px] w-[251px] tracking-[-0.130px]">Piste: utiliser largeur de netclasse</Combo>
          <div className="ml-[3px] flex size-[38px] shrink-0 items-center justify-center border border-[#0078d7] bg-[#b3d6f3]"><Icon n="trackw" /></div>
          <Sep className="ml-[5px]" />
          <Combo className="ml-[6px] w-[254px]">Via: utiliser la taille des netclasses</Combo>
          <Sep className="ml-[5px]" />
          <Combo dark className="ml-[7px] w-[155px] tracking-[-0.100px]">
            <div className="mr-[5px] size-[12px] border border-black bg-[#c83434]" />
            F.Cu (PgUp)
          </Combo>
          <svg viewBox="0 0 30 30" className="ml-[7px] size-[30px] shrink-0">
            <path d="M0 0h30v30H0z" fill="#4d7fc4" />
            <path d="M0 0h22L8 30H0z" fill="#c83434" />
            <path d="M22.500 0L8.500 30" stroke="#fff" strokeWidth="3.500" />
            <path d="M22.500 0L8.500 30" stroke="#333" strokeWidth="2" strokeDasharray="2 1" />
          </svg>
          <Sep className="ml-[9px]" />
          <Combo className="ml-[6px] w-[209px] tracking-[-0.060px]">0,5000 mm (19,69 mils)</Combo>
          <Sep className="ml-[5px]" />
          <Combo className="ml-[6px] w-[119px]">Zoom 1,00</Combo>
        </div>
      </div>
      <div className="flex h-[758px] shrink-0">
        <div className="w-[33px] shrink-0 overflow-hidden">
          <VerticalBar tools={leftTools} className="-ml-[8px] w-[38px] pt-[4px]" />
        </div>
        <div className="w-[1602px] shrink-0 overflow-hidden border-t border-r border-l border-[#a0a0a0] bg-[#001021]">
          <Board />
        </div>
        <VerticalBar tools={rightTools} className="w-[44px] shrink-0 pt-[4px]" />
        <div className="w-[5px] shrink-0 bg-[#dcdcdc]" />
        <RightPanel />
      </div>
      <Dialog />
    </div>
  );
}
